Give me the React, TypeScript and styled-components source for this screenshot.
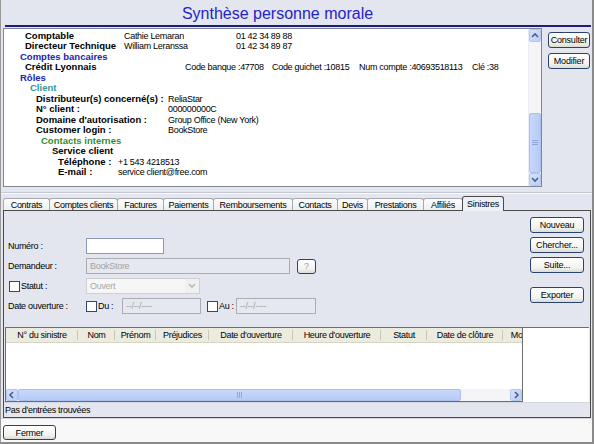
import React from "react";
import styled, { createGlobalStyle } from "styled-components";

const FONT = `"Liberation Sans", Arial, sans-serif`;

const GlobalStyle = createGlobalStyle`
  html, body { margin: 0; padding: 0; background: #e4e6ef; }
  body { font-family: ${FONT}; }
  *, *::before, *::after { box-sizing: border-box; }
`;

const Window = styled.div`
  width: 594px;
  height: 444px;
  display: flex;
  flex-direction: column;
  background: #e4e6ef;
  border-left: 1px solid #9a9a9a;
  border-right: 2px solid #8a8a8a;
  border-bottom: 2px solid #8a8a8a;
  font-family: ${FONT};
  font-size: 9px;
  letter-spacing: -0.3px;
  color: #000;
  overflow: hidden;
`;

const Header = styled.div`
  height: 25px;
  padding: 2px 38px 0 0;
  text-align: center;
  font-size: 16px;
  line-height: 23px;
  letter-spacing: 0;
  color: #2424c4;
`;

const Rule = styled.div`
  height: 2px;
  margin: 0 1px 0 4px;
  background: #1e1e7a;
`;

const TopSection = styled.div`
  margin-top: 1px;
  height: 159px;
  display: flex;
`;

const InfoBox = styled.div`
  margin-left: 2px;
  width: 539px;
  border: 1px solid #7d8797;
  background: #fff;
  display: flex;
`;

const InfoContent = styled.div`
  flex: 1;
  padding-top: 1.5px;
  overflow: hidden;
`;

const Line = styled.div<{ $indent: number }>`
  display: flex;
  align-items: baseline;
  height: 10.5px;
  line-height: 10.5px;
  padding-left: ${(p) => p.$indent}px;
  white-space: nowrap;
`;

const Key = styled.span<{ $w?: number; $color?: string }>`
  font-weight: bold;
  font-size: 9.5px;
  letter-spacing: 0;
  color: ${(p) => p.$color ?? "#000"};
  ${(p) => (p.$w ? `flex: 0 0 ${p.$w}px;` : "")}
`;

const Val = styled.span<{ $w?: number }>`
  font-size: 9px;
  ${(p) => (p.$w ? `flex: 0 0 ${p.$w}px;` : "")}
`;

const VScroll = styled.div`
  width: 13px;
  display: flex;
  flex-direction: column;
  background: #f5f5f8;
  border-left: 1px solid #eceef4;
`;

const ScrollBtn = styled.div<{ $size?: number }>`
  flex: 0 0 ${(p) => p.$size ?? 13}px;
  background: linear-gradient(135deg, #d6e2fc, #b9cdf7);
  border: 1px solid #b3c6ee;
  border-radius: 2px;
  display: flex;
  align-items: center;
  justify-content: center;
`;

const Track = styled.div`
  flex: 1;
`;

const Thumb = styled.div<{ $len: number; $horizontal?: boolean }>`
  flex: 0 0 ${(p) => p.$len}px;
  background: linear-gradient(${(p) => (p.$horizontal ? "180deg" : "90deg")}, #c9d8fa, #b6cbf5);
  border: 1px solid #a9bff0;
  border-radius: 2px;
  display: flex;
  align-items: center;
  justify-content: center;
`;

const SideButtons = styled.div`
  flex: 1;
  display: flex;
  flex-direction: column;
  gap: 5px;
  padding: 4px 0 0 6px;
`;

const Btn = styled.button<{ $w: number; $h?: number; $muted?: boolean }>`
  width: ${(p) => p.$w}px;
  height: ${(p) => p.$h ?? 16}px;
  padding: 0;
  font-family: ${FONT};
  font-size: 9px;
  letter-spacing: -0.2px;
  color: ${(p) => (p.$muted ? "#a0a0a0" : "#000")};
  border: 1px solid #2a4270;
  border-radius: 3px;
  background: linear-gradient(#ffffff, #f2f2ee 70%, #dcdcd6);
  display: flex;
  align-items: center;
  justify-content: center;
  flex: none;
`;

const Separator = styled.div`
  margin: 5px 0 2px;
  height: 2px;
  border-top: 1px solid #c5c8d2;
  border-bottom: 1px solid #fafbff;
`;

const TabBar = styled.div`
  display: flex;
  align-items: flex-end;
  height: 14px;
  margin-left: 2px;
  position: relative;
  z-index: 2;
`;

const Tab = styled.div<{ $w: number; $active?: boolean }>`
  width: ${(p) => p.$w}px;
  height: ${(p) => (p.$active ? 15 : 12)}px;
  margin-bottom: ${(p) => (p.$active ? -1 : 0)}px;
  margin-left: -1px;
  &:first-child { margin-left: 0; }
  border: 1px solid ${(p) => (p.$active ? "#4a4a4a" : "#a6a9b0")};
  border-bottom: none;
  border-radius: 3px 3px 0 0;
  background: ${(p) => (p.$active ? "#eef0f5" : "linear-gradient(#fdfdfd, #eeeff2)")};
  display: flex;
  align-items: center;
  justify-content: center;
  padding-top: ${(p) => (p.$active ? 0 : 1)}px;
  white-space: nowrap;
  position: relative;
  z-index: ${(p) => (p.$active ? 2 : 1)};
`;

const Panel = styled.div`
  width: 588px;
  height: 208px;
  margin-left: 2px;
  border: 1px solid #4a4a4a;
  display: flex;
  flex-direction: column;
`;

const UpperArea = styled.div`
  height: 116px;
  display: flex;
`;

const FormArea = styled.div`
  flex: 1;
  padding: 25px 0 0 4px;
  display: flex;
  flex-direction: column;
`;

const FormRow = styled.div`
  display: flex;
  align-items: center;
  height: 20px;
`;

const FieldLabel = styled.span<{ $w: number }>`
  flex: 0 0 ${(p) => p.$w}px;
  display: flex;
  align-items: center;
  white-space: nowrap;
`;

const TextBox = styled.div<{ $w: number; $disabled?: boolean }>`
  width: ${(p) => p.$w}px;
  height: 16px;
  flex: none;
  border: 1px solid ${(p) => (p.$disabled ? "#a9adb6" : "#8c9bb3")};
  background: ${(p) => (p.$disabled ? "#e6e8ef" : "#fff")};
  color: #a4a4a4;
  padding-left: 3px;
  display: flex;
  align-items: center;
  white-space: nowrap;
`;

const SelectBox = styled.div<{ $w: number }>`
  width: ${(p) => p.$w}px;
  height: 16px;
  flex: none;
  border: 1px solid #cfd0d4;
  background: #f6f6f6;
  color: #a8a8a8;
  padding-left: 3px;
  display: flex;
  align-items: center;
  justify-content: space-between;
`;

const SelectArrow = styled.span`
  width: 14px;
  height: 14px;
  display: flex;
  align-items: center;
  justify-content: center;
  background: #f0f0f0;
`;

const Check = styled.span<{ $ml?: number; $mr?: number }>`
  width: 11px;
  height: 11px;
  flex: none;
  border: 1px solid #2c4a78;
  background: #fff;
  margin-left: ${(p) => p.$ml ?? 0}px;
  margin-right: ${(p) => p.$mr ?? 1}px;
`;

const Gap = styled.span<{ $w: number }>`
  flex: 0 0 ${(p) => p.$w}px;
`;

const ActionCol = styled.div`
  flex: 0 0 54px;
  margin-right: 6px;
  padding-top: 6px;
  display: flex;
  flex-direction: column;
  gap: 4px;
`;

const GridBox = styled.div`
  height: 75px;
  margin: 0 1px;
  background: #fff;
  border-top: 1px solid #6e6e6e;
  display: flex;
`;

const Grid = styled.div`
  width: 518px;
  display: flex;
  flex-direction: column;
  border-left: 1px solid #6e6e6e;
  border-right: 1px solid #6e6e6e;
  border-bottom: 1px solid #6e6e6e;
  overflow: hidden;
`;

const GridHead = styled.div`
  height: 15px;
  display: flex;
  background: #ecebe0;
  border-bottom: 1px solid #d8d4c4;
  white-space: nowrap;
`;

const HeadCell = styled.div<{ $w: number }>`
  flex: 0 0 ${(p) => p.$w}px;
  position: relative;
  text-align: center;
  line-height: 14px;
  &::after {
    content: "";
    position: absolute;
    right: 0;
    top: 2px;
    bottom: 2px;
    width: 1px;
    background: #c9c6b4;
  }
`;

const GridBody = styled.div`
  flex: 1;
`;

const HScroll = styled.div`
  height: 12px;
  display: flex;
  background: #f5f5f8;
`;

const Status = styled.div`
  height: 15px;
  padding-left: 1px;
  line-height: 14px;
  border-top: 1px solid #d4d6de;
`;

const Footer = styled.div`
  flex: 1;
  background: #f8f8f8;
  border-top: 1px solid #d8d8d8;
  padding: 6px 0 0 2px;
`;

const Grip = ({ vertical }: { vertical?: boolean }) =>
  vertical ? (
    <svg width="6" height="6" viewBox="0 0 6 6">
      <path d="M0 0.5h6M0 2.5h6M0 4.5h6" stroke="#8ea6dc" strokeWidth="1" />
    </svg>
  ) : (
    <svg width="6" height="6" viewBox="0 0 6 6">
      <path d="M0.5 0v6M2.5 0v6M4.5 0v6" stroke="#8ea6dc" strokeWidth="1" />
    </svg>
  );

const Chevron = ({ dir, color = "#4b5f8c" }: { dir: "up" | "down" | "left" | "right"; color?: string }) => {
  const pts = {
    up: "1,5 4,2 7,5",
    down: "1,2 4,5 7,2",
    left: "5,1 2,4 5,7",
    right: "3,1 6,4 3,7",
  }[dir];
  return (
    <svg width="8" height="8" viewBox="0 0 8 8">
      <polyline points={pts} fill="none" stroke={color} strokeWidth="1.6" />
    </svg>
  );
};

const tabs = [
  { label: "Contrats", w: 47 },
  { label: "Comptes clients", w: 69 },
  { label: "Factures", w: 47 },
  { label: "Paiements", w: 51 },
  { label: "Remboursements", w: 80 },
  { label: "Contacts", w: 46 },
  { label: "Devis", w: 31 },
  { label: "Prestations", w: 57 },
  { label: "Affiliés", w: 40 },
  { label: "Sinistres", w: 42, active: true },
];

const columns = [
  { label: "N° du sinistre", w: 72 },
  { label: "Nom", w: 37 },
  { label: "Prénom", w: 41 },
  { label: "Préjudices", w: 53 },
  { label: "Date d'ouverture", w: 84 },
  { label: "Heure d'ouverture", w: 88 },
  { label: "Statut", w: 46 },
  { label: "Date de clôture", w: 76 },
  { label: "Montant", w: 46 },
];

const BLUE = "#2323b4";
const TEAL = "#2e9a9a";
const GREEN = "#2f8f2f";

export default function App() {
  return (
    <>
      <GlobalStyle />
      <Window>
        <Header>Synthèse personne morale</Header>
        <Rule />
        <TopSection>
          <InfoBox>
            <InfoContent>
              <Line $indent={21}>
                <Key $w={99}>Comptable</Key>
                <Val $w={112}>Cathie Lemaran</Val>
                <Val>01 42 34 89 88</Val>
              </Line>
              <Line $indent={21}>
                <Key $w={99}>Directeur Technique</Key>
                <Val $w={112}>William Leranssa</Val>
                <Val>01 42 34 89 87</Val>
              </Line>
              <Line $indent={16}>
                <Key $color={BLUE}>Comptes bancaires</Key>
              </Line>
              <Line $indent={21}>
                <Key $w={160}>Crédit Lyonnais</Key>
                <Val $w={87}>Code banque :47708</Val>
                <Val $w={87}>Code guichet :10815</Val>
                <Val $w={113}>Num compte :40693518113</Val>
                <Val>Clé :38</Val>
              </Line>
              <Line $indent={16}>
                <Key $color={BLUE}>Rôles</Key>
              </Line>
              <Line $indent={26}>
                <Key $color={TEAL}>Client</Key>
              </Line>
              <Line $indent={32}>
                <Key $w={132}>Distributeur(s) concerné(s) :</Key>
                <Val>ReliaStar</Val>
              </Line>
              <Line $indent={32}>
                <Key $w={132}>N° client :</Key>
                <Val>000000000C</Val>
              </Line>
              <Line $indent={32}>
                <Key $w={132}>Domaine d'autorisation :</Key>
                <Val>Group Office (New York)</Val>
              </Line>
              <Line $indent={32}>
                <Key $w={132}>Customer login :</Key>
                <Val>BookStore</Val>
              </Line>
              <Line $indent={37}>
                <Key $color={GREEN}>Contacts internes</Key>
              </Line>
              <Line $indent={48}>
                <Key>Service client</Key>
              </Line>
              <Line $indent={54}>
                <Key $w={60}>Téléphone :</Key>
                <Val>+1 543 4218513</Val>
              </Line>
              <Line $indent={54}>
                <Key $w={60}>E-mail :</Key>
                <Val>service client@free.com</Val>
              </Line>
            </InfoContent>
            <VScroll>
              <ScrollBtn>
                <Chevron dir="up" />
              </ScrollBtn>
              <Track />
              <Thumb $len={60}>
                <Grip vertical />
              </Thumb>
              <ScrollBtn>
                <Chevron dir="down" />
              </ScrollBtn>
            </VScroll>
          </InfoBox>
          <SideButtons>
            <Btn $w={42}>Consulter</Btn>
            <Btn $w={42}>Modifier</Btn>
          </SideButtons>
        </TopSection>
        <Separator />
        <TabBar>
          {tabs.map((t) => (
            <Tab key={t.label} $w={t.w} $active={t.active}>
              {t.label}
            </Tab>
          ))}
        </TabBar>
        <Panel>
          <UpperArea>
            <FormArea>
              <FormRow>
                <FieldLabel $w={78}>Numéro :</FieldLabel>
                <TextBox $w={78} />
              </FormRow>
              <FormRow>
                <FieldLabel $w={78}>Demandeur :</FieldLabel>
                <TextBox $w={204} $disabled>
                  BookStore
                </TextBox>
                <Gap $w={7} />
                <Btn $w={19} $h={15} $muted>
                  ?
                </Btn>
              </FormRow>
              <FormRow>
                <FieldLabel $w={78}>
                  <Check $ml={1} />
                  Statut :
                </FieldLabel>
                <SelectBox $w={114}>
                  Ouvert
                  <SelectArrow>
                    <Chevron dir="down" color="#b8b8b8" />
                  </SelectArrow>
                </SelectBox>
              </FormRow>
              <FormRow>
                <FieldLabel $w={78}>Date ouverture :</FieldLabel>
                <FieldLabel $w={36}>
                  <Check />
                  Du :
                </FieldLabel>
                <TextBox $w={79} $disabled>
                  --/--/----
                </TextBox>
                <Gap $w={6} />
                <FieldLabel $w={29}>
                  <Check />
                  Au :
                </FieldLabel>
                <TextBox $w={80} $disabled>
                  --/--/----
                </TextBox>
              </FormRow>
            </FormArea>
            <ActionCol>
              <Btn $w={54}>Nouveau</Btn>
              <Btn $w={54}>Chercher...</Btn>
              <Btn $w={54}>Suite...</Btn>
              <Gap $w={6} />
              <Btn $w={54}>Exporter</Btn>
            </ActionCol>
          </UpperArea>
          <GridBox>
            <Grid>
              <GridHead>
                {columns.map((c) => (
                  <HeadCell key={c.label} $w={c.w}>
                    {c.label}
                  </HeadCell>
                ))}
              </GridHead>
              <GridBody />
              <HScroll>
                <ScrollBtn $size={12}>
                  <Chevron dir="left" />
                </ScrollBtn>
                <Thumb $len={443} $horizontal>
                  <Grip />
                </Thumb>
                <Track />
                <ScrollBtn $size={12}>
                  <Chevron dir="right" />
                </ScrollBtn>
              </HScroll>
            </Grid>
          </GridBox>
          <Status>Pas d'entrées trouvées</Status>
        </Panel>
        <Footer>
          <Btn $w={53} $h={15}>
            Fermer
          </Btn>
        </Footer>
      </Window>
    </>
  );
}
